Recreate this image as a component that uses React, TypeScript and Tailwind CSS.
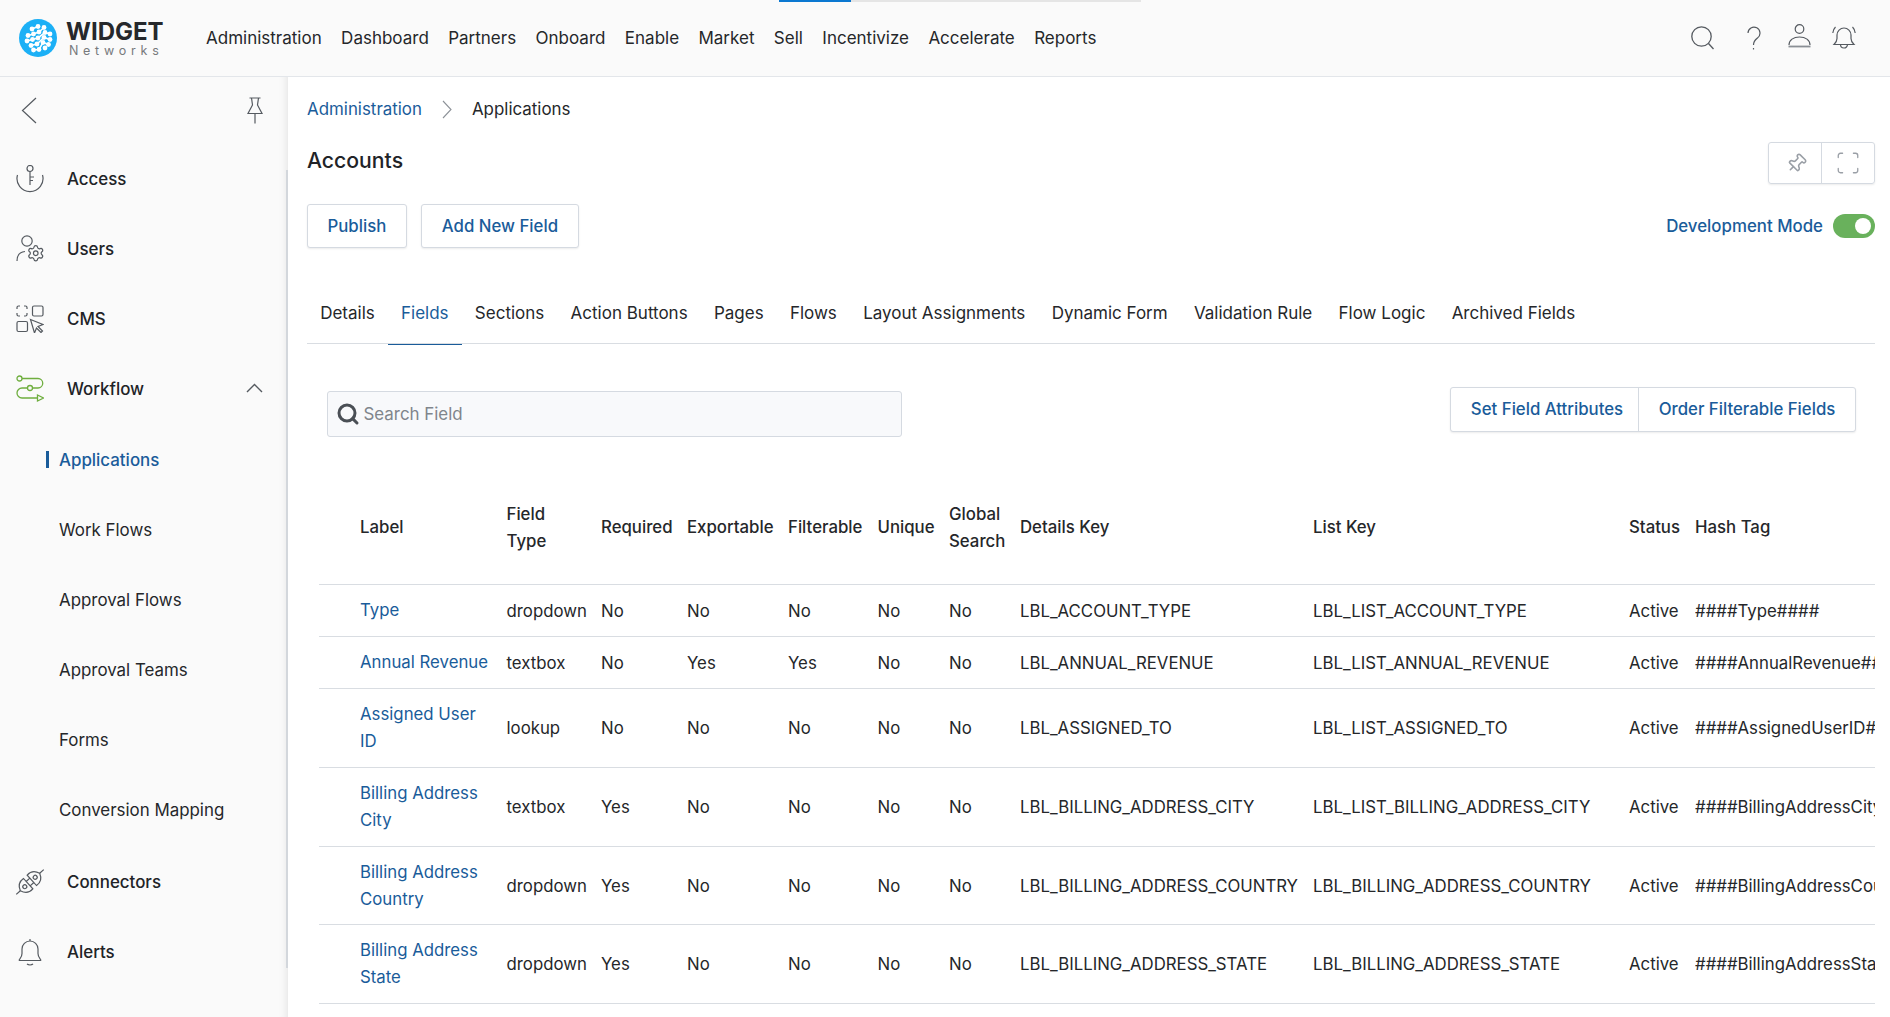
import { Pin, Scan, Search, Settings } from "lucide-react";

const NAV = ["Administration", "Dashboard", "Partners", "Onboard", "Enable", "Market", "Sell", "Incentivize", "Accelerate", "Reports"];
const TABS = ["Details", "Fields", "Sections", "Action Buttons", "Pages", "Flows", "Layout Assignments", "Dynamic Form", "Validation Rule", "Flow Logic", "Archived Fields"];
const SUB_ITEMS = ["Work Flows", "Approval Flows", "Approval Teams", "Forms", "Conversion Mapping"];

const ROWS = [
  { label: "Type", type: "dropdown", req: "No", exp: "No", fil: "No", details: "LBL_ACCOUNT_TYPE", list: "LBL_LIST_ACCOUNT_TYPE", hash: "####Type####" },
  { label: "Annual Revenue", type: "textbox", req: "No", exp: "Yes", fil: "Yes", details: "LBL_ANNUAL_REVENUE", list: "LBL_LIST_ANNUAL_REVENUE", hash: "####AnnualRevenue####" },
  { label: "Assigned User ID", type: "lookup", req: "No", exp: "No", fil: "No", details: "LBL_ASSIGNED_TO", list: "LBL_LIST_ASSIGNED_TO", hash: "####AssignedUserID####" },
  { label: "Billing Address City", type: "textbox", req: "Yes", exp: "No", fil: "No", details: "LBL_BILLING_ADDRESS_CITY", list: "LBL_LIST_BILLING_ADDRESS_CITY", hash: "####BillingAddressCity####" },
  { label: "Billing Address Country", type: "dropdown", req: "Yes", exp: "No", fil: "No", details: "LBL_BILLING_ADDRESS_COUNTRY", list: "LBL_BILLING_ADDRESS_COUNTRY", hash: "####BillingAddressCountry####", tight: true },
  { label: "Billing Address State", type: "dropdown", req: "Yes", exp: "No", fil: "No", details: "LBL_BILLING_ADDRESS_STATE", list: "LBL_BILLING_ADDRESS_STATE", hash: "####BillingAddressState####" },
];

function Logo() {
  const dots = [
    [13, 10], [19, 7.5], [25, 8.5],
    [9, 16.5], [14.5, 15], [20, 13], [26, 13.5], [31, 15],
    [8, 22], [13.5, 20.5], [19, 19], [25, 18.5], [31, 20.5],
    [12, 26.5], [18, 25], [24, 23.5], [29.5, 25.5],
    [14.5, 31], [20, 30.5], [26, 29],
  ];
  return (
    <svg width="38" height="38" viewBox="0 0 38 38">
      <circle cx="19" cy="19" r="19" fill="#1cb0f6" />
      <g stroke="#fff" strokeWidth="1.6" fill="none" strokeLinecap="round">
        <path d="M13 10 19 7.5" />
        <path d="M9 16.5 14.5 15 20 13 25 8.5" />
        <path d="M8 22 13.5 20.5 19 19 26 13.5 31 15" />
        <path d="M12 26.5 18 25 25 18.5 31 20.5" />
        <path d="M14.5 31 20 30.5 24 23.5 29.5 25.5" />
      </g>
      {dots.map(([x, y]) => (
        <circle key={`${x}-${y}`} cx={x} cy={y} r="2.4" fill="#fff" />
      ))}
    </svg>
  );
}

function HeaderIcons() {
  return (
    <div className="flex items-center text-[#555a60]">
      <svg className="mr-[33px]" width="23" height="24" viewBox="0 0 23 24" fill="none" stroke="currentColor" strokeWidth="1.3">
        <circle cx="10.5" cy="10.5" r="9.7" />
        <path d="M17.5 17.5 22.5 23" />
      </svg>
      <svg className="mr-[27px]" width="14" height="24" viewBox="0 0 14 24" fill="none" stroke="currentColor" strokeWidth="1.2">
        <path d="M1 7a6 6 0 1 1 9.5 5C8 14 6.5 15 6.5 19" />
        <path d="M6.5 22v1.5" />
      </svg>
      <svg className="mr-[21px] mb-[4px]" width="23" height="24" viewBox="0 0 23 24" fill="none" stroke="currentColor" strokeWidth="1.2">
        <circle cx="11.5" cy="5" r="4.3" />
        <path d="M1 21c0-5 4.5-8 10.5-8S22 16 22 21" />
        <path d="M.5 22.5h22" strokeWidth="1.8" stroke="#8a8f95" />
      </svg>
      <svg className="mr-[34px]" width="24" height="24" viewBox="0 0 24 24" fill="none" stroke="currentColor" strokeWidth="1.2">
        <path d="M2 18.5c1.5-1.5 3-3 3-6V9a7 7 0 0 1 14 0v3.5c0 3 1.5 4.5 3 6Z" />
        <path d="M8.5 18.5a3.5 3.5 0 0 0 7 0" />
        <path d="M.8 7C1 4.5 2 2.5 3.5 1M23.2 7C23 4.5 22 2.5 20.5 1" />
      </svg>
    </div>
  );
}

function TopBar() {
  return (
    <header className="relative flex h-[77px] shrink-0 items-center border-b border-[#e3e6ea] bg-[#fafafa]">
      {/* tab loader strip */}
      <div className="absolute left-[779px] top-0 flex h-[2px]">
        <div className="w-[72px] bg-[#0b78d1]" />
        <div className="w-[290px] bg-[#e5e5e5]" />
      </div>
      <div className="ml-[19px] flex w-[187px] shrink-0 items-center gap-[9px]">
        <Logo />
        <div className="flex flex-col pt-[1px]">
          <span className="text-[24px] font-bold leading-[24px] text-[#26282b]">WIDGET</span>
          <span className="ml-[3px] text-[12.5px] leading-[14px] tracking-[4.7px] text-[#77797c]">Networks</span>
        </div>
      </div>
      <nav className="flex gap-[19.4px] pt-[2px]">
        {NAV.map((n) => (
          <span key={n} className="text-[17px] text-[#25272a]">{n}</span>
        ))}
      </nav>
      <div className="ml-auto">
        <HeaderIcons />
      </div>
    </header>
  );
}

const iconProps = { fill: "none", stroke: "#555a60", strokeWidth: 1.2 };

function AccessIcon() {
  return (
    <svg width="28" height="28" viewBox="0 0 28 28" {...iconProps}>
      <circle cx="14" cy="3.5" r="3" />
      <path d="M14 6.5V20M14 12h4M14 15.5h3" />
      <path d="M1.5 10A13 13 0 1 0 26.5 10" />
    </svg>
  );
}

function UsersIcon() {
  return (
    <svg width="28" height="28" viewBox="0 0 28 28" {...iconProps}>
      <circle cx="11" cy="6" r="5.2" />
      <path d="M1 26c0-6 3-9 8-9.5" />
      <Settings x={10.5} y={9} width={18.5} height={18.5} strokeWidth={1.55} stroke="#555a60" />
    </svg>
  );
}

function CmsIcon() {
  return (
    <svg width="28" height="28" viewBox="0 0 28 28" {...iconProps}>
      <path d="M1 4V2.5A1.5 1.5 0 0 1 2.5 1H4M8 1h1.5A1.5 1.5 0 0 1 11 2.5V4M11 8v1.5A1.5 1.5 0 0 1 9.5 11H8M4 11H2.5A1.5 1.5 0 0 1 1 9.5V8" />
      <rect x="16.5" y="1" width="10.5" height="10" rx="1.5" />
      <rect x="1" y="16.5" width="10.5" height="10" rx="1.5" />
      <path d="M14.5 14.5 27 19.5 22 21.5 26.5 26 25 27.5 20.5 23 18.5 28Z" />
    </svg>
  );
}

function WorkflowIcon() {
  return (
    <svg width="28" height="28" viewBox="0 0 28 28" fill="none" stroke="#6fae3f" strokeWidth="1.3">
      <circle cx="3.5" cy="3.5" r="2.5" />
      <circle cx="14" cy="13" r="2.5" />
      <path d="M6 3.5H22a4.75 4.75 0 0 1 0 9.5H16.5M11.5 13H6a5 5 0 0 0 0 10H21.5" />
      <path d="M21.5 20 27.5 23 21.5 26Z" />
    </svg>
  );
}

function ConnectorIcon() {
  return (
    <svg className="overflow-visible" width="28" height="28" viewBox="0 0 28 28" {...iconProps}>
      <g transform="rotate(-42 14 14)">
        <path d="M1 14C3 8 7.5 6.5 11.5 7V21C7.5 21.5 3 20 1 14Z" />
        <path d="M27 14C25 8 20.5 6.5 16.5 7V21C20.5 21.5 25 20 27 14Z" />
        <circle cx="7" cy="14" r="2" />
        <circle cx="21" cy="14" r="2" />
        <path d="M11.5 11h5M11.5 17h5M-4.5 14h5.5M27 14h5.5" />
      </g>
    </svg>
  );
}

function AlertIcon() {
  return (
    <svg width="28" height="28" viewBox="0 0 28 28" {...iconProps}>
      <path d="M3 22.5h22M3 22.5c0-1.5 3-2.5 3-7V11a8 8 0 0 1 16 0v4.5c0 4.5 3 5.5 3 7" />
      <path d="M14 1v2M11 26c1.5 1.3 4.5 1.3 6 0" />
    </svg>
  );
}

function SideItem({ label, icon, className = "" }: { label: string; icon: React.ReactNode; className?: string }) {
  return (
    <div className={`flex h-[70px] items-center pl-[16px] ${className}`}>
      <span className="flex w-[51px] shrink-0">{icon}</span>
      <span className="pt-[2px] text-[16.9px] font-medium text-[#212327]">{label}</span>
    </div>
  );
}

function SubItem({ label, active }: { label: string; active?: boolean }) {
  return (
    <div className="flex h-[70px] items-center pl-[46px]">
      <span className={`mr-[10px] h-[17px] w-[3px] ${active ? "bg-[#1a5c9a]" : ""}`} />
      <span className={`pt-[4px] text-[16.9px] ${active ? "font-medium text-[#1a5c9a]" : "text-[#25272a]"}`}>{label}</span>
    </div>
  );
}

function Sidebar() {
  return (
    <aside className="relative flex w-[288px] shrink-0 flex-col overflow-hidden bg-[#fafafa] shadow-[inset_-9px_0_8px_-8px_rgba(0,0,0,0.1)]">
      {/* scrollbar thumb */}
      <div className="absolute right-0 top-[93px] h-[798px] w-[2px] bg-[#d3d7dc]" />
      <div className="flex h-[67px] shrink-0 items-center justify-between pb-[1px] pl-[21px] pr-[25px]">
        <svg width="16" height="27" viewBox="0 0 16 27" fill="none" stroke="#555a60" strokeWidth="1.2">
          <path d="M15 1 1.5 13.5 15 26" />
        </svg>
        <svg width="16" height="27" viewBox="0 0 16 27" fill="none" stroke="#555a60" strokeWidth="1.2">
          <path d="M2.5 1H13.5M4.5 1 5.5 8 1 16.5H15L10.5 8 11.5 1M8 16.5V26.5" />
        </svg>
      </div>
      <SideItem label="Access" icon={<AccessIcon />} />
      <SideItem label="Users" icon={<UsersIcon />} />
      <SideItem label="CMS" icon={<CmsIcon />} />
      <div className="relative">
        <SideItem label="Workflow" icon={<WorkflowIcon />} />
        <svg className="absolute right-[25px] top-[29px]" width="17" height="10" viewBox="0 0 17 10" fill="none" stroke="#555a60" strokeWidth="1.4">
          <path d="M1 9 8.5 1.5 16 9" />
        </svg>
      </div>
      <SubItem label="Applications" active />
      {SUB_ITEMS.map((s) => (
        <SubItem key={s} label={s} />
      ))}
      <SideItem label="Connectors" icon={<ConnectorIcon />} className="mt-[3px]" />
      <SideItem label="Alerts" icon={<AlertIcon />} />
    </aside>
  );
}

function FieldsTable() {
  const thCls = "pt-[2px] text-left font-medium";
  const tdCls = "pt-[2px]";
  return (
    <div className="ml-[12px] overflow-hidden">
      <table className="w-[1556px] table-fixed text-[16.8px] leading-[27px] text-[#25272a]">
        <colgroup>
          <col className="w-[187.5px]" />
          <col className="w-[94.5px]" />
          <col className="w-[86px]" />
          <col className="w-[101px]" />
          <col className="w-[89.5px]" />
          <col className="w-[71.5px]" />
          <col className="w-[71px]" />
          <col className="w-[293px]" />
          <col className="w-[316px]" />
          <col className="w-[66px]" />
          <col className="w-[180px]" />
        </colgroup>
        <thead>
          <tr className="h-[114px] border-b border-[#d9dde2]">
            <th className={`${thCls} pl-[41px]`}>Label</th>
            <th className={thCls}>Field<br />Type</th>
            <th className={thCls}>Required</th>
            <th className={thCls}>Exportable</th>
            <th className={thCls}>Filterable</th>
            <th className={thCls}>Unique</th>
            <th className={thCls}>Global<br />Search</th>
            <th className={thCls}>Details Key</th>
            <th className={thCls}>List Key</th>
            <th className={thCls}>Status</th>
            <th className={thCls}>Hash Tag</th>
          </tr>
        </thead>
        <tbody>
          {ROWS.map((r) => (
            <tr key={r.label} className="border-b border-[#d9dde2]">
              <td className={`pl-[41px] pr-[15px] pt-[12.5px] text-[#1a5c9a] ${r.tight ? "pb-[10.5px]" : "pb-[11.5px]"}`}>{r.label}</td>
              <td className={tdCls}>{r.type}</td>
              <td className={tdCls}>{r.req}</td>
              <td className={tdCls}>{r.exp}</td>
              <td className={tdCls}>{r.fil}</td>
              <td className={tdCls}>No</td>
              <td className={tdCls}>No</td>
              <td className={`${tdCls} whitespace-nowrap`}>{r.details}</td>
              <td className={`${tdCls} whitespace-nowrap`}>{r.list}</td>
              <td className={tdCls}>Active</td>
              <td className={`${tdCls} overflow-hidden whitespace-nowrap`}>{r.hash}</td>
            </tr>
          ))}
        </tbody>
      </table>
    </div>
  );
}

function Button({ children }: { children: React.ReactNode }) {
  return (
    <button className="flex h-[44px] items-center rounded-[3px] border border-[#d5dae1] bg-white px-[19.5px] pt-[2px] text-[16.8px] font-medium text-[#1a5c9a] shadow-[0_1px_2px_rgba(0,0,0,0.08)]">
      {children}
    </button>
  );
}

export default function App() {
  return (
    <div className="flex h-[1017px] w-[1890px] flex-col overflow-hidden bg-white font-['Inter',sans-serif]">
      <TopBar />
      <div className="flex min-h-0 flex-1">
        <Sidebar />
        <main className="min-w-0 flex-1 pl-[19px] pr-[15px]">
          {/* Breadcrumb */}
          <div className="flex h-[62px] items-center pt-[2px] text-[16.9px]">
            <span className="pt-[2px] text-[#1a5c9a]">Administration</span>
            <svg className="ml-[20px] mr-[20px]" width="10" height="19" viewBox="0 0 10 19" fill="none" stroke="#8d9298" strokeWidth="1.1">
              <path d="M1 1 9 9.5 1 18" />
            </svg>
            <span className="pt-[2px] text-[#25272a]">Applications</span>
          </div>

          {/* Title */}
          <div className="mt-[3px] flex h-[42px] items-start justify-between">
            <h1 className="text-[21.2px] font-medium leading-[36px] text-[#212327]">Accounts</h1>
            <div className="flex h-[42px] w-[107px] rounded-[3px] border border-[#d5dae1] shadow-[0_1px_2px_rgba(0,0,0,0.08)]">
              <span className="flex w-[53px] items-center justify-center border-r border-[#d5dae1] pl-[2px]">
                <Pin size={21} strokeWidth={1.8} className="rotate-45 text-[#9a9fa6]" />
              </span>
              <span className="flex flex-1 items-center justify-center">
                <Scan size={26} strokeWidth={1.2} className="text-[#9a9fa6]" />
              </span>
            </div>
          </div>

          {/* Actions */}
          <div className="mt-[20px] flex h-[44px] items-center justify-between">
            <div className="flex gap-[14.5px]">
              <Button>Publish</Button>
              <Button>Add New Field</Button>
            </div>
            <div className="flex items-center gap-[10px]">
              <span className="pt-[2px] text-[16.85px] font-medium text-[#1a5c9a]">Development Mode</span>
              <span className="flex h-[24px] w-[42px] items-center justify-end rounded-full bg-[#69b15c] pr-[4px]">
                <span className="h-[16px] w-[16px] rounded-full bg-white" />
              </span>
            </div>
          </div>

          {/* Tabs */}
          <div className="mt-[34px] flex h-[62px] border-b-[1.5px] border-[#d9dde2]">
            {TABS.map((t) => (
              <span
                key={t}
                className={`-mb-[1.5px] flex items-center border-b-[1.5px] px-[13.15px] pt-[1px] text-[17px] ${
                  t === "Fields" ? "border-[#1a5c9a] text-[#1a5c9a]" : "border-transparent text-[#25272a]"
                }`}
              >
                {t}
              </span>
            ))}
          </div>

          {/* Search + actions */}
          <div className="mt-[43px] flex h-[50px] items-start justify-between pl-[19.5px] pr-[19px]">
            <div className="mt-[4px] flex h-[46px] w-[575px] items-center rounded-[3px] border border-[#d5dae1] bg-[#f8f9fb] pl-[8px]">
              <Search size={24} strokeWidth={3} className="mr-[4px] text-[#4a4f55]" />
              <span className="pt-[2px] text-[16.9px] text-[#80858c]">Search Field</span>
            </div>
            <div className="flex h-[45px] rounded-[3px] border border-[#d5dae1] bg-white text-[16.8px] font-medium text-[#1a5c9a] shadow-[0_1px_2px_rgba(0,0,0,0.08)]">
              <span className="flex w-[188px] items-center justify-center border-r border-[#d5dae1] pl-[5px]">Set Field Attributes</span>
              <span className="flex w-[216px] items-center justify-center">Order Filterable Fields</span>
            </div>
          </div>

          <div className="mt-[33px]">
            <FieldsTable />
          </div>
        </main>
      </div>
    </div>
  );
}
